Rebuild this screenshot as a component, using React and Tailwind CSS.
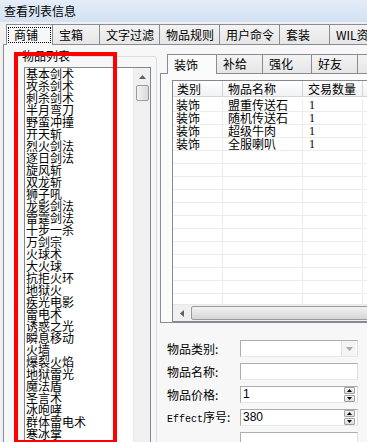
import React from "react";

const skills = [
  "基本剑术", "攻杀剑术", "刺杀剑术", "半月弯刀", "野蛮冲撞", "开天斩", "烈火剑法", "逐日剑法",
  "旋风斩", "双龙斩", "狮子吼", "龙影剑法", "雷霆剑法", "十步一杀", "万剑宗", "火球术",
  "大火球", "抗拒火环", "地狱火", "疾光电影", "雷电术", "诱惑之光", "瞬息移动", "火墙",
  "爆裂火焰", "地狱雷光", "魔法盾", "圣言术", "冰咆哮", "群体雷电术", "寒冰掌", "灭天火",
];

const outerTabs = [
  { label: "商铺", w: "w-[47px]", active: true },
  { label: "宝箱", w: "w-[47px]" },
  { label: "文字过滤", w: "w-[60px]" },
  { label: "物品规则", w: "w-[60px]" },
  { label: "用户命令", w: "w-[60px]" },
  { label: "套装", w: "w-[50px]" },
  { label: "WIL资源", w: "w-[60px]" },
];

const innerTabs = [
  { label: "装饰", w: "w-[50px]", active: true },
  { label: "补给", w: "w-[46px]" },
  { label: "强化", w: "w-[49px]" },
  { label: "好友", w: "w-[46px]" },
  { label: "", w: "w-[40px]" },
];

const items = [
  ["装饰", "盟重传送石", "1"],
  ["装饰", "随机传送石", "1"],
  ["装饰", "超级牛肉", "1"],
  ["装饰", "全服喇叭", "1"],
];

function Tri({ dir = "up", color = "#000" }) {
  const pts = {
    up: "0,4 3.5,0 7,4",
    down: "0,0 3.5,4 7,0",
    left: "4,0 0,3.5 4,7",
  }[dir];
  const w = dir === "left" ? 4 : 7;
  const h = dir === "left" ? 7 : 4;
  return (
    <svg width={w} height={h} viewBox={`0 0 ${w} ${h}`}>
      <polygon points={pts} fill={color} />
    </svg>
  );
}

function Spin() {
  return (
    <div className="flex flex-col w-[11px] h-[15px] mr-[2px] gap-px">
      <div className="flex-1 flex items-center justify-center border border-[#a0a0a0] bg-gradient-to-b from-[#f6f6f6] to-[#dcdcdc] rounded-[1px]">
        <svg width="5" height="3"><polygon points="0,3 2.5,0 5,3" fill="#000" /></svg>
      </div>
      <div className="flex-1 flex items-center justify-center border border-[#a0a0a0] bg-gradient-to-b from-[#f6f6f6] to-[#dcdcdc] rounded-[1px]">
        <svg width="5" height="3"><polygon points="0,0 2.5,3 5,0" fill="#000" /></svg>
      </div>
    </div>
  );
}

function Field({ label, kind, value }) {
  return (
    <div className="flex items-center h-[17px]">
      <div className="w-[73px] whitespace-nowrap leading-[17px]">{label}</div>
      <div className="w-[118px] h-[17px] flex items-center bg-white border border-[#abadb3] border-b-[#e3e9ef] border-r-[#dbdfe6]">
        <div className="flex-1 pl-[2px] leading-[15px] font-['Liberation_Sans',sans-serif]">{value}</div>
        {kind === "combo" && (
          <div className="w-[15px] h-[15px] flex items-center justify-center border-l border-[#e0e0e0] bg-[#f4f4f4] mr-px">
            <Tri dir="down" color="#a8a8a8" />
          </div>
        )}
        {kind === "spin" && <Spin />}
      </div>
    </div>
  );
}

export default function App() {
  return (
    <div className="relative w-[367px] h-[442px] overflow-hidden bg-[#f0f0f0] text-[12px] text-black font-['Noto_Sans_CJK_SC','Noto_Sans',sans-serif]">
      {/* title */}
      <div className="h-[22px] pl-[4px] flex items-center bg-gradient-to-b from-[#e4edf8] to-[#d2e1f2] text-[12px]">
        查看列表信息
      </div>

      {/* outer tabs */}
      <div className="h-[22px] pt-[2px] pl-[6px] flex">
        {outerTabs.map((t, i) => (
          <div
            key={i}
            className={`${t.w} shrink-0 h-[20px] flex items-center border-t border-r border-[#898c95] ${
              i === 0 ? "border-l" : ""
            } ${t.active ? "bg-[#f7f7f7] relative z-10 h-[21px] -mb-px" : "bg-gradient-to-b from-[#f3f3f3] to-[#e6e6e6]"}`}
          >
            {t.active ? (
              <span className="mx-px w-full h-[16px] pl-[5px] border border-dotted border-black leading-[14px]">
                {t.label}
              </span>
            ) : (
              <span className="pl-[6px] whitespace-nowrap">{t.label}</span>
            )}
          </div>
        ))}
      </div>

      {/* outer panel */}
      <div className="ml-[3px] h-[398px] flex border-t border-l border-[#898c95] bg-[#f7f7f7]">
        {/* group box */}
        <fieldset className="ml-[12px] mt-[5px] w-[141px] h-[420px] shrink-0 border border-[#d5dfe5] rounded-[3px] pl-[7px] pr-[5px] pt-[5px] m-0">
          <legend className="ml-[-4px] px-[2px] leading-[12px]">物品列表</legend>
          <div className="h-[400px] flex bg-white border border-[#828790]">
            <div className="flex-1 pl-[1px] leading-[12px] whitespace-nowrap overflow-hidden">
              {skills.map((s) => (
                <div key={s} className="h-[12px]">{s}</div>
              ))}
            </div>
            <div className="w-[17px] bg-[#f0f0f0] border-l border-[#e8e8e8] flex flex-col items-center">
              <div className="h-[17px] w-full flex items-center justify-center">
                <Tri dir="up" color="#606060" />
              </div>
              <div className="w-[13px] h-[16px] rounded-[2px] border border-[#9a9a9a] bg-gradient-to-r from-[#f2f2f2] to-[#dadada]" />
            </div>
          </div>
        </fieldset>

        {/* right side */}
        <div className="ml-[3px] flex-1 flex flex-col">
          <div className="mt-[9px] pl-[7px] flex h-[19px]">
            {innerTabs.map((t, i) => (
              <div
                key={i}
                className={`${t.w} shrink-0 flex items-center border-t border-r border-[#898c95] ${
                  i === 0 ? "border-l" : ""
                } ${t.active ? "bg-[#fbfbfb] relative z-10 h-[20px] -mb-px" : "h-[19px] bg-gradient-to-b from-[#f3f3f3] to-[#e6e6e6]"}`}
              >
                <span className="pl-[6px] whitespace-nowrap">{t.label}</span>
              </div>
            ))}
          </div>
          <div className="h-[254px] border-t border-l border-b border-[#898c95] bg-[#fbfbfb] pl-[11px] pt-[6px]">
            {/* list view */}
            <div className="w-[220px] h-[242px] flex flex-col bg-white border border-[#828790]">
              <div className="h-[16px] flex shrink-0 border-b border-[#d5d5d5] bg-gradient-to-b from-white to-[#f1f2f4]">
                <div className="w-[50px] pl-[4px] border-r border-[#d5d5d5] leading-[15px]">类别</div>
                <div className="w-[80px] pl-[5px] border-r border-[#d5d5d5] leading-[15px]">物品名称</div>
                <div className="w-[60px] pl-[5px] border-r border-[#d5d5d5] leading-[15px]">交易数量</div>
                <div className="flex-1" />
              </div>
              <div className="flex-1 overflow-hidden pt-[2px]">
                {Array.from({ length: 17 }).map((_, r) => {
                  const it = items[r] || ["", "", ""];
                  return (
                    <div key={r} className="h-[13px] flex border-b border-[#ececec] leading-[12px]">
                      <div className="w-[50px] pl-[3px] border-r border-[#ececec]">{it[0]}</div>
                      <div className="w-[80px] pl-[5px] border-r border-[#ececec]">{it[1]}</div>
                      <div className="w-[60px] pl-[6px] border-r border-[#ececec] font-['Liberation_Serif',serif]">{it[2]}</div>
                      <div className="flex-1" />
                    </div>
                  );
                })}
              </div>
              <div className="h-[17px] shrink-0 flex bg-[#f0f0f0] border-t border-[#e8e8e8]">
                <div className="w-[17px] flex items-center justify-center">
                  <Tri dir="left" color="#606060" />
                </div>
                <div className="flex-1 my-[1px] ml-px rounded-[2px] border border-[#9a9a9a] bg-gradient-to-b from-[#f2f2f2] to-[#d6d6d6]" />
              </div>
            </div>
          </div>

          {/* form */}
          <div className="mt-[17px] pl-[7px] flex flex-col gap-[6px]">
            <Field label="物品类别:" kind="combo" value="" />
            <Field label="物品名称:" value="" />
            <Field label="物品价格:" kind="spin" value="1" />
            <Field
              label={
                <>
                  <span className="font-['Liberation_Mono',monospace] text-[10px]">Effect</span>序号:
                </>
              }
              kind="spin"
              value="380"
            />
            <Field label="" value="" />
          </div>
        </div>
      </div>

      {/* red highlight */}
      <div className="absolute left-[14px] top-[52px] w-[103px] h-[392px] border-[4px] border-[#ff0000] pointer-events-none" />
    </div>
  );
}
